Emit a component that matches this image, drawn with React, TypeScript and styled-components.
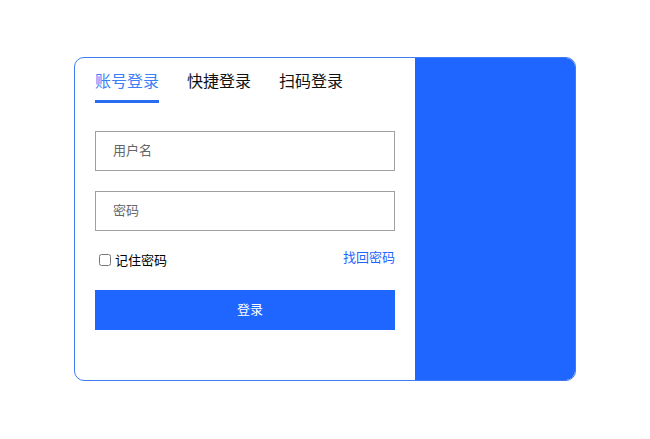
import styled, { createGlobalStyle } from "styled-components";

const GlobalStyle = createGlobalStyle`
  html, body {
    margin: 0;
    padding: 0;
    background: #fff;
    font-family: "Noto Sans CJK SC", "Liberation Sans", sans-serif;
  }
`;

const Page = styled.div`
  width: 650px;
  height: 439px;
  box-sizing: border-box;
  padding-top: 57px;
  display: flex;
  justify-content: center;
`;

const Card = styled.div`
  width: 502px;
  height: 324px;
  box-sizing: border-box;
  border: 1px solid #3d7cf4;
  border-radius: 10px;
  overflow: hidden;
  display: flex;
`;

const FormPanel = styled.div`
  flex: 1;
  padding: 0 20px;
`;

const SidePanel = styled.div`
  width: 160px;
  background: #1e66ff;
`;

const Tabs = styled.div`
  display: flex;
  gap: 28px;
  padding-top: 10px;
`;

const Tab = styled.div<{ $active?: boolean }>`
  font-size: 16px;
  line-height: 24px;
  padding-bottom: 8px;
  border-bottom: 3px solid ${({ $active }) => ($active ? "#2a6cf2" : "transparent")};
  color: ${({ $active }) => ($active ? "#3d80f6" : "#111")};
  white-space: nowrap;
`;

const Input = styled.input<{ $first?: boolean }>`
  display: block;
  box-sizing: border-box;
  width: 300px;
  height: 40px;
  border: 1px solid #a0a0a0;
  padding: 0 17px 3px;
  font-size: 13px;
  font-family: inherit;
  color: #333;
  outline: none;
  margin-top: ${({ $first }) => ($first ? "28px" : "20px")};

  &::placeholder {
    color: #666;
  }
`;

const OptionsRow = styled.div`
  display: flex;
  justify-content: space-between;
  align-items: flex-start;
  margin-top: 18px;
  height: 22px;
`;

const Remember = styled.label`
  display: flex;
  align-items: center;
  font-size: 13px;
  line-height: 18px;
  color: #000;
  margin-top: 2px;

  input {
    margin: 0 4px 0 4px;
    width: 12px;
    height: 12px;
  }
`;

const Forgot = styled.a`
  font-size: 13px;
  color: #1e66ff;
  text-decoration: none;
  line-height: 16px;
`;

const Submit = styled.button`
  display: block;
  width: 300px;
  height: 40px;
  margin-top: 19px;
  padding: 0 0 3px 10px;
  border: 0;
  background: #1e66ff;
  color: #fff;
  font-size: 13px;
  font-family: inherit;
  cursor: pointer;
`;

export default function App() {
  return (
    <>
      <GlobalStyle />
      <Page>
        <Card>
          <FormPanel>
            <Tabs>
              <Tab $active>账号登录</Tab>
              <Tab>快捷登录</Tab>
              <Tab>扫码登录</Tab>
            </Tabs>
            <Input $first placeholder="用户名" />
            <Input type="password" placeholder="密码" />
            <OptionsRow>
              <Remember>
                <input type="checkbox" />
                记住密码
              </Remember>
              <Forgot href="#">找回密码</Forgot>
            </OptionsRow>
            <Submit>登录</Submit>
          </FormPanel>
          <SidePanel />
        </Card>
      </Page>
    </>
  );
}
